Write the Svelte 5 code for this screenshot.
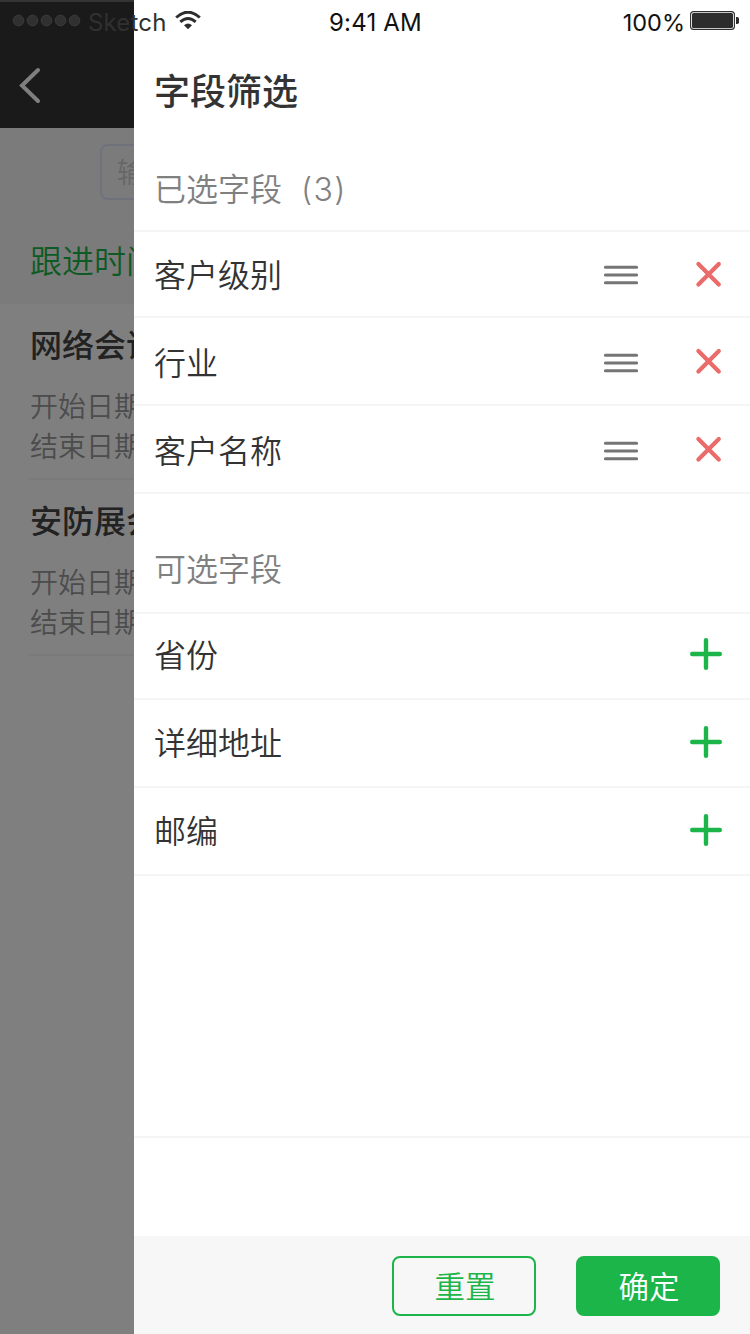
<script>
  const selected = ['客户级别', '行业', '客户名称'];
  const available = ['省份', '详细地址', '邮编'];
  const records = ['网络会议', '安防展会'];
</script>

<div class="screen">
  <div class="page">
    <header class="nav">
      <svg class="back" width="24" height="38" viewBox="0 0 24 38">
        <path d="M20 3 4 18.5 20 34" fill="none" stroke="#fff" stroke-width="4" stroke-linecap="round" />
      </svg>
    </header>
    <section class="search">
      <div class="input">输入关键字</div>
      <div class="sort">跟进时间</div>
    </section>
    {#each records as title}
      <article class="record">
        <h3>{title}</h3>
        <p>开始日期</p>
        <p>结束日期</p>
      </article>
    {/each}
  </div>
  <div class="mask"></div>

  <aside class="drawer">
    <h1>字段筛选</h1>
    <h2 class="first">已选字段<span class="num">(3)</span></h2>
    <ul class="chosen">
      {#each selected as name}
        <li>
          <span class="name">{name}</span>
          <svg class="drag" width="36" height="22" viewBox="0 0 36 22">
            <path d="M2.4 3.3h31.2M2.4 11h31.2M2.4 18.8h31.2" stroke="#757575" stroke-width="3" stroke-linecap="round" />
          </svg>
          <svg class="remove" width="28" height="28" viewBox="0 0 28 28">
            <path d="M3.4 4l20.4 20.4M23.8 4 3.4 24.4" stroke="#eb6a6a" stroke-width="4.2" stroke-linecap="round" />
          </svg>
        </li>
      {/each}
    </ul>
    <h2 class="second">可选字段</h2>
    <ul class="grow">
      {#each available as name}
        <li>
          <span class="name">{name}</span>
          <svg class="add" width="32" height="32" viewBox="0 0 32 32">
            <path d="M2.2 16h27.6M16 2.2v27.6" stroke="#1bb549" stroke-width="4.4" stroke-linecap="round" />
          </svg>
        </li>
      {/each}
    </ul>
    <footer>
      <button class="reset">重置</button>
      <button class="ok">确定</button>
    </footer>
  </aside>

  <div class="status">
    <div class="left">
      <svg width="70" height="14" viewBox="0 0 70 14">
        {#each [0, 1, 2, 3, 4] as i}
          <circle cx={6.5 + i * 14} cy="7.5" r="5.3" fill="#303030" stroke="#3d3d3d" stroke-width="1" />
        {/each}
      </svg>
      <span class="carrier">Sketch</span>
      <svg class="wifi" width="26" height="19" viewBox="0 0 26 19">
        <path d="M1.2 6.5Q13-4.2 24.8 6.5M5.3 10.8q7.7-6.8 15.4 0" fill="none" stroke="#2d2d2d" stroke-width="2.9" />
        <path d="M9 14.2q4-3.2 8 0L13 18.2z" fill="#2d2d2d" />
      </svg>
    </div>
    <span class="time">9:41 AM</span>
    <div class="right">
      <span>100%</span>
      <svg width="49" height="19" viewBox="0 0 49 19">
        <rect x=".6" y=".6" width="43.8" height="17.8" rx="3" fill="none" stroke="#2d2d2d" stroke-width="1.1" />
        <rect x="2" y="2" width="41" height="15" rx="1.6" fill="#2d2d2d" />
        <path d="M46 6h1.2q1.8 0 1.8 1.8v3.4q0 1.8-1.8 1.8H46z" fill="#2d2d2d" />
      </svg>
    </div>
  </div>
</div>

<style>
  :global(body) { background: #fff; overflow: hidden; }
  .screen {
    width: 750px;
    height: 1334px;
    display: grid;
    grid-template: 1fr / 134px 616px;
    overflow: hidden;
    font-family: "Noto Sans CJK SC", sans-serif;
    font-weight: 350;
    color: #333;
  }
  h1, h2, h3, p, ul { margin: 0; padding: 0; font-weight: 350; }
  .page { grid-area: 1 / 1; overflow: hidden; white-space: nowrap; background: #fff; }
  .mask { grid-area: 1 / 1; background: rgba(0, 0, 0, .5); }
  .nav {
    box-sizing: border-box;
    height: 128px;
    background: #343434;
    border-top: 2px solid #686868;
    padding: 65px 0 0 18px;
  }
  .back { display: block; }
  .search { box-sizing: border-box; height: 176px; background: #f7f7f7; padding: 16px 0 0 30px; }
  .input {
    box-sizing: border-box;
    width: 550px;
    height: 56px;
    margin-left: 70px;
    padding-left: 15px;
    border: 2px solid #dfe3f8;
    border-radius: 8px;
    font-size: 28px;
    line-height: 51px;
    color: #ccc;
  }
  .sort { margin-top: 35px; font-size: 32px; line-height: 48px; color: #1bb549; }
  .record {
    box-sizing: border-box;
    height: 176px;
    margin-left: 28px;
    padding: 15px 0 0 2px;
    border-bottom: 2px solid #f4f4f4;
  }
  .record h3 { font-size: 32px; line-height: 48px; font-weight: 500; color: #444; margin-bottom: 18px; }
  .record p { font-size: 28px; line-height: 40px; color: #999; }

  .drawer { grid-area: 1 / 2; display: flex; flex-direction: column; background: #fff; }
  h1 { padding: 62px 0 0 20px; font-size: 36px; line-height: 54px; font-weight: 500; }
  h2 { font-size: 32px; line-height: 48px; padding-left: 20px; color: #808080; border-bottom: 2px solid #f5f5f5; }
  .num { margin-left: 19px; font-family: Inter, sans-serif; font-weight: 300; line-height: 1; letter-spacing: 1.3px; }
  .first { height: 48px; margin-top: 47px; padding-bottom: 19px; }
  .second { height: 48px; margin-top: 49px; padding-bottom: 21px; }
  ul { list-style: none; }
  li {
    box-sizing: border-box;
    height: 88px;
    display: flex;
    align-items: center;
    padding: 0 28px 0 20px;
    border-bottom: 2px solid #f5f5f5;
  }
  li:first-child { height: 86px; }
  .name { flex: 1; font-size: 32px; line-height: 48px; margin-bottom: 2px; }
  .chosen .name { margin-bottom: 0; }
  .chosen li:first-child .name { margin-bottom: 2px; }
  .drag { margin: 4px 56px 0 0; }
  .chosen li:first-child .drag { margin-top: 2px; }
  .remove { margin-right: -1px; }
  .grow { height: 522px; border-bottom: 2px solid #f5f5f5; }
  .grow li { padding-bottom: 2px; }
  .grow li:first-child { padding-bottom: 4px; }
  footer {
    box-sizing: border-box;
    height: 98px;
    margin-top: auto;
    padding: 20px 30px 18px;
    display: flex;
    justify-content: flex-end;
    gap: 40px;
    background: #f7f7f7;
  }
  button {
    box-sizing: border-box;
    width: 144px;
    height: 60px;
    padding: 0 0 2px 2px;
    border: 2px solid #1bb549;
    border-radius: 8px;
    font: 350 30.5px/54px "Noto Sans CJK SC", sans-serif;
  }
  .reset { background: transparent; color: #1bb549; }
  .ok { background: #1bb549; color: #fff; }

  .status {
    grid-area: 1 / 1 / 2 / 3;
    align-self: start;
    box-sizing: border-box;
    height: 40px;
    padding: 0 11px 0 12px;
    display: grid;
    grid-template-columns: 1fr auto 1fr;
    align-items: center;
    z-index: 1;
    font: 24px/34px Inter, sans-serif;
    color: #111;
  }
  .left, .right { display: flex; align-items: center; height: 40px; }
  .left span, .right span { padding-top: 6px; }
  .carrier { margin: 0 8px 0 6px; color: #303030; letter-spacing: .17px; }
  .time { padding-top: 6px; letter-spacing: .2px; }
  .right { justify-content: flex-end; gap: 5px; }
  .right span { font-size: 23.5px; }
</style>
